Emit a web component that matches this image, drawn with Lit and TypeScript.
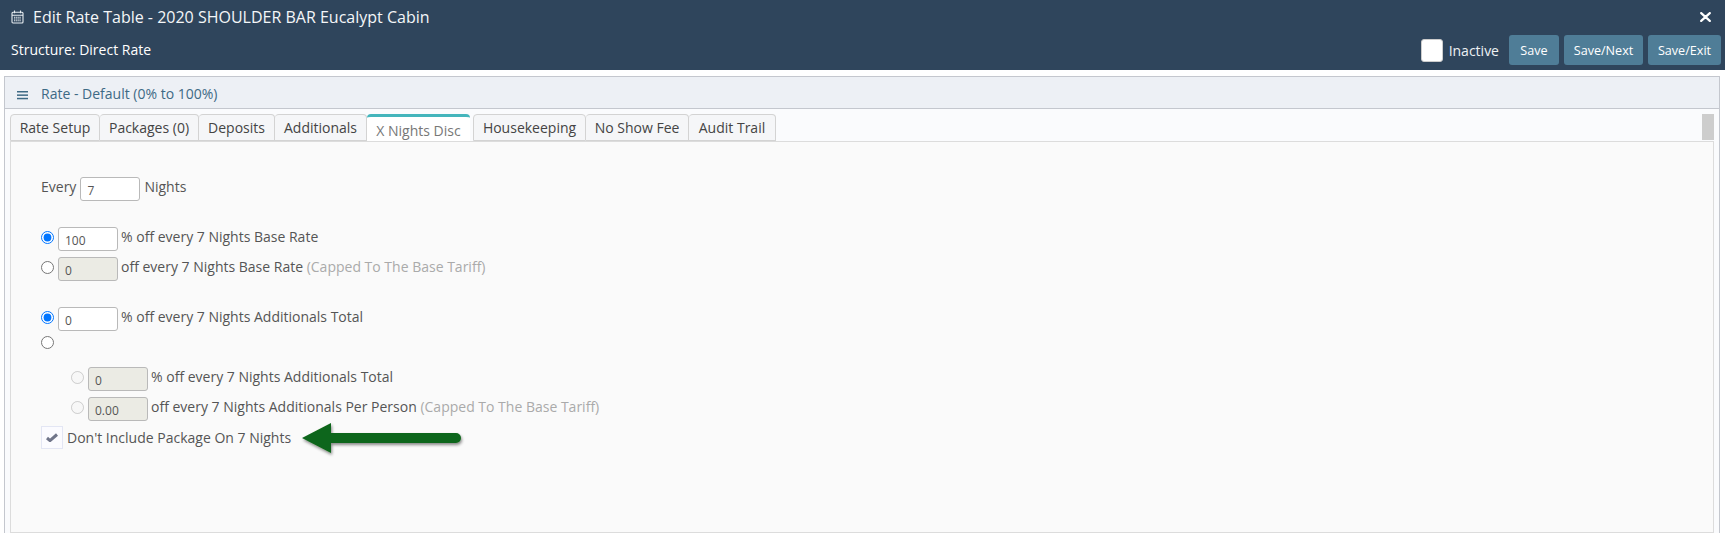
import { LitElement, html, css } from "lit";
import { customElement } from "lit/decorators.js";

const tabs = [
  ["Rate Setup", 90],
  ["Packages (0)", 99],
  ["Deposits", 76],
  ["Additionals", 92],
  ["X Nights Disc", 103],
  ["Housekeeping", 113],
  ["No Show Fee", 103],
  ["Audit Trail", 87],
] as const;

@customElement("app-root")
export class AppRoot extends LitElement {
  static styles = css`
    :host {
      display: block;
      height: 533px;
      overflow: hidden;
      background: #fff;
      font-family: "Open Sans", "Noto Sans", sans-serif;
      font-size: 14px;
      color: #555;
    }
    * { box-sizing: border-box; }
    .top {
      height: 70px;
      background: #2f455c;
      color: #fff;
      display: flex;
      flex-direction: column;
      padding: 0 4px 0 11px;
    }
    .title-row {
      height: 33px;
      display: flex;
      align-items: center;
      gap: 9px;
      font-size: 16px;
      padding-right: 10px;
      color: #f4f6f8;
    }
    .title { flex: 1; }
    .sub-row {
      height: 34px;
      display: flex;
      align-items: center;
      gap: 5px;
      font-size: 14px;
    }
    .structure { flex: 1; margin-bottom: 1px; }
    .inactive {
      display: flex;
      align-items: center;
      gap: 6px;
      font-size: 14px;
      margin-right: 5px;
      color: #eef1f4;
    }
    .box {
      width: 22px;
      height: 23px;
      background: #fff;
      border: 1px solid #ccc;
      border-radius: 3px;
    }
    button {
      height: 30px;
      border: 0;
      border-radius: 3px;
      background: #4f7d97;
      color: #fff;
      font: 400 12.6px "Open Sans", sans-serif;
      padding: 0;
    }
    .panel {
      margin: 6px 5px 0 4px;
      height: 457px;
      border: 1px solid #c4c7ce;
      border-bottom: 0;
      background: #fafbfd;
      display: flex;
      flex-direction: column;
    }
    .panel-head {
      height: 32px;
      flex: none;
      background: #edf0f5;
      border-bottom: 1px solid #c4c7ce;
      display: flex;
      align-items: center;
      gap: 13px;
      padding: 1px 0 0 12px;
      font-size: 14px;
      color: #3e6a85;
    }
    .menu { margin-top: 4px; }
    .body {
      flex: 1;
      padding: 5px 5px 0 5px;
      display: flex;
      flex-direction: column;
    }
    .tabs {
      height: 28px;
      flex: none;
      display: flex;
    }
    .tab {
      height: 27px;
      background: #f5f6f8;
      border: 1px solid #d3d3d3;
      border-left-width: 0;
      border-radius: 4px 4px 0 0;
      display: flex;
      align-items: center;
      justify-content: center;
      color: #444;
      font-size: 14px;
    }
    .tab:first-child { border-left-width: 1px; }
    .tab.active {
      height: 28px;
      background: #fff;
      border: 0;
      border-top: 3px solid #44b5bc;
      color: #777;
      padding-top: 1px;
      margin-right: 3px;
    }
    .tab.after { border-left-width: 1px; }
    .spacer { flex: 1; }
    .thumb {
      width: 12px;
      height: 26px;
      background: #cdcdcd;
    }
    .content {
      flex: 1;
      background: #fafafa;
      border: 1px solid #dcdcdc;
      border-top: 0;
      box-shadow: inset 0 1px 0 #dcdcdc;
      margin-top: -1px;
      padding: 36px 0 0 30px;
      display: flex;
      flex-direction: column;
    }
    .row {
      display: flex;
      align-items: flex-start;
      height: 24px;
      line-height: 19px;
    }
    .row span { white-space: nowrap; }
    .every { gap: 4px; margin-bottom: 26px; }
    .opt { gap: 3px; margin-bottom: 6px; }
    .opt input[type="radio"] {
      margin: 4px 1px 0 0;
      width: 13px;
      height: 13px;
      flex: none;
    }
    .gap-top { margin-top: 20px; }
    input[type="text"] {
      width: 60px;
      height: 24px;
      border: 1px solid #b9b9b9;
      border-radius: 3px;
      background: #fff;
      padding: 2px 0 0 6px;
      margin: 0;
      font: 400 12px "Open Sans", sans-serif;
      color: #555;
      outline: none;
    }
    input[type="text"]:disabled {
      background: #ebebe4;
      color: #555;
    }
    .radio-only { height: 13px; margin-bottom: 18px; margin-top: -1px; }
    .radio-top { margin-top: 0 !important; }
    .nested { margin-left: 30px; }
    .hint { color: #aaa; }
    .check-row {
      display: flex;
      align-items: center;
      height: 23px;
      margin-top: -1px;
      gap: 4px;
    }
    .check {
      width: 22px;
      height: 23px;
      background: #fbfbff;
      border: 1px solid #e3e6f4;
      display: flex;
      align-items: center;
      justify-content: center;
    }
    .arrow { margin-left: 6px; overflow: visible; }
  `;

  render() {
    return html`
      <div class="top">
        <div class="title-row">
          <svg width="13" height="14" viewBox="0 0 13 14" fill="none" stroke="#e8edf1" stroke-width="1.1">
            <rect x="1" y="2.2" width="11" height="10.8" rx="1"></rect>
            <path d="M1 5.2h11M3.5 .6v2.6M9.5 .6v2.6"></path>
            <path d="M3 7.3h7M3 9h7M3 10.8h7" stroke-dasharray="1.4 .7"></path>
          </svg>
          <span class="title">Edit Rate Table - 2020 SHOULDER BAR Eucalypt Cabin</span>
          <svg width="11" height="10" viewBox="0 0 11 10" stroke="#fff" stroke-width="2.2" stroke-linecap="round">
            <path d="M1.2 1.1l8.6 7.8M9.8 1.1l-8.6 7.8"></path>
          </svg>
        </div>
        <div class="sub-row">
          <span class="structure">Structure: Direct Rate</span>
          <label class="inactive"><span class="box"></span>Inactive</label>
          <button style="width:50px">Save</button>
          <button style="width:79px">Save/Next</button>
          <button style="width:73px">Save/Exit</button>
        </div>
      </div>
      <div class="panel">
        <div class="panel-head">
          <svg class="menu" width="11" height="9" viewBox="0 0 11 9" fill="#3e6a85">
            <rect y="0" width="11" height="1.5"></rect>
            <rect y="3.4" width="11" height="1.5"></rect>
            <rect y="6.8" width="11" height="1.5"></rect>
          </svg>
          <span>Rate - Default (0% to 100%)</span>
        </div>
        <div class="body">
          <div class="tabs">
            ${tabs.map(
              ([t, w], i) => html`<div
                class="tab ${i === 4 ? "active" : ""} ${i === 5 ? "after" : ""}"
                style="width:${w}px"
              >${t}</div>`
            )}
            <div class="spacer"></div>
            <div class="thumb"></div>
          </div>
          <div class="content">
            <div class="row every">
              <span>Every</span><input type="text" value="7" /><span>Nights</span>
            </div>
            <div class="row opt">
              <input type="radio" name="a" checked /><input type="text" value="100" /><span>% off every 7 Nights Base Rate</span>
            </div>
            <div class="row opt">
              <input type="radio" name="a" /><input type="text" value="0" disabled /><span>off every 7 Nights Base Rate <span class="hint">(Capped To The Base Tariff)</span></span>
            </div>
            <div class="row opt gap-top">
              <input type="radio" name="b" checked /><input type="text" value="0" /><span>% off every 7 Nights Additionals Total</span>
            </div>
            <div class="row opt radio-only">
              <input class="radio-top" type="radio" name="b" />
            </div>
            <div class="row opt nested">
              <input type="radio" name="c" disabled /><input type="text" value="0" disabled /><span>% off every 7 Nights Additionals Total</span>
            </div>
            <div class="row opt nested">
              <input type="radio" name="c" disabled /><input type="text" value="0.00" disabled /><span>off every 7 Nights Additionals Per Person <span class="hint">(Capped To The Base Tariff)</span></span>
            </div>
            <div class="check-row">
              <span class="check">
                <svg width="12" height="9" viewBox="0 0 12 9" fill="none" stroke="#70758a" stroke-width="3">
                  <path d="M1 5l3 2.6L11 1.5"></path>
                </svg>
              </span>
              <span>Don't Include Package On 7 Nights</span>
              <svg class="arrow" width="160" height="32" viewBox="0 0 160 32">
                <defs>
                  <filter id="s" x="-10%" y="-30%" width="120%" height="170%">
                    <feDropShadow dx="1" dy="2" stdDeviation="1.5" flood-color="#000" flood-opacity=".45"></feDropShadow>
                  </filter>
                </defs>
                <path
                  d="M1 16L30 1V11H155a5 5 0 0 1 0 10H30V31Z"
                  fill="#0f661a"
                  filter="url(#s)"
                ></path>
              </svg>
            </div>
          </div>
        </div>
      </div>
    `;
  }
}
